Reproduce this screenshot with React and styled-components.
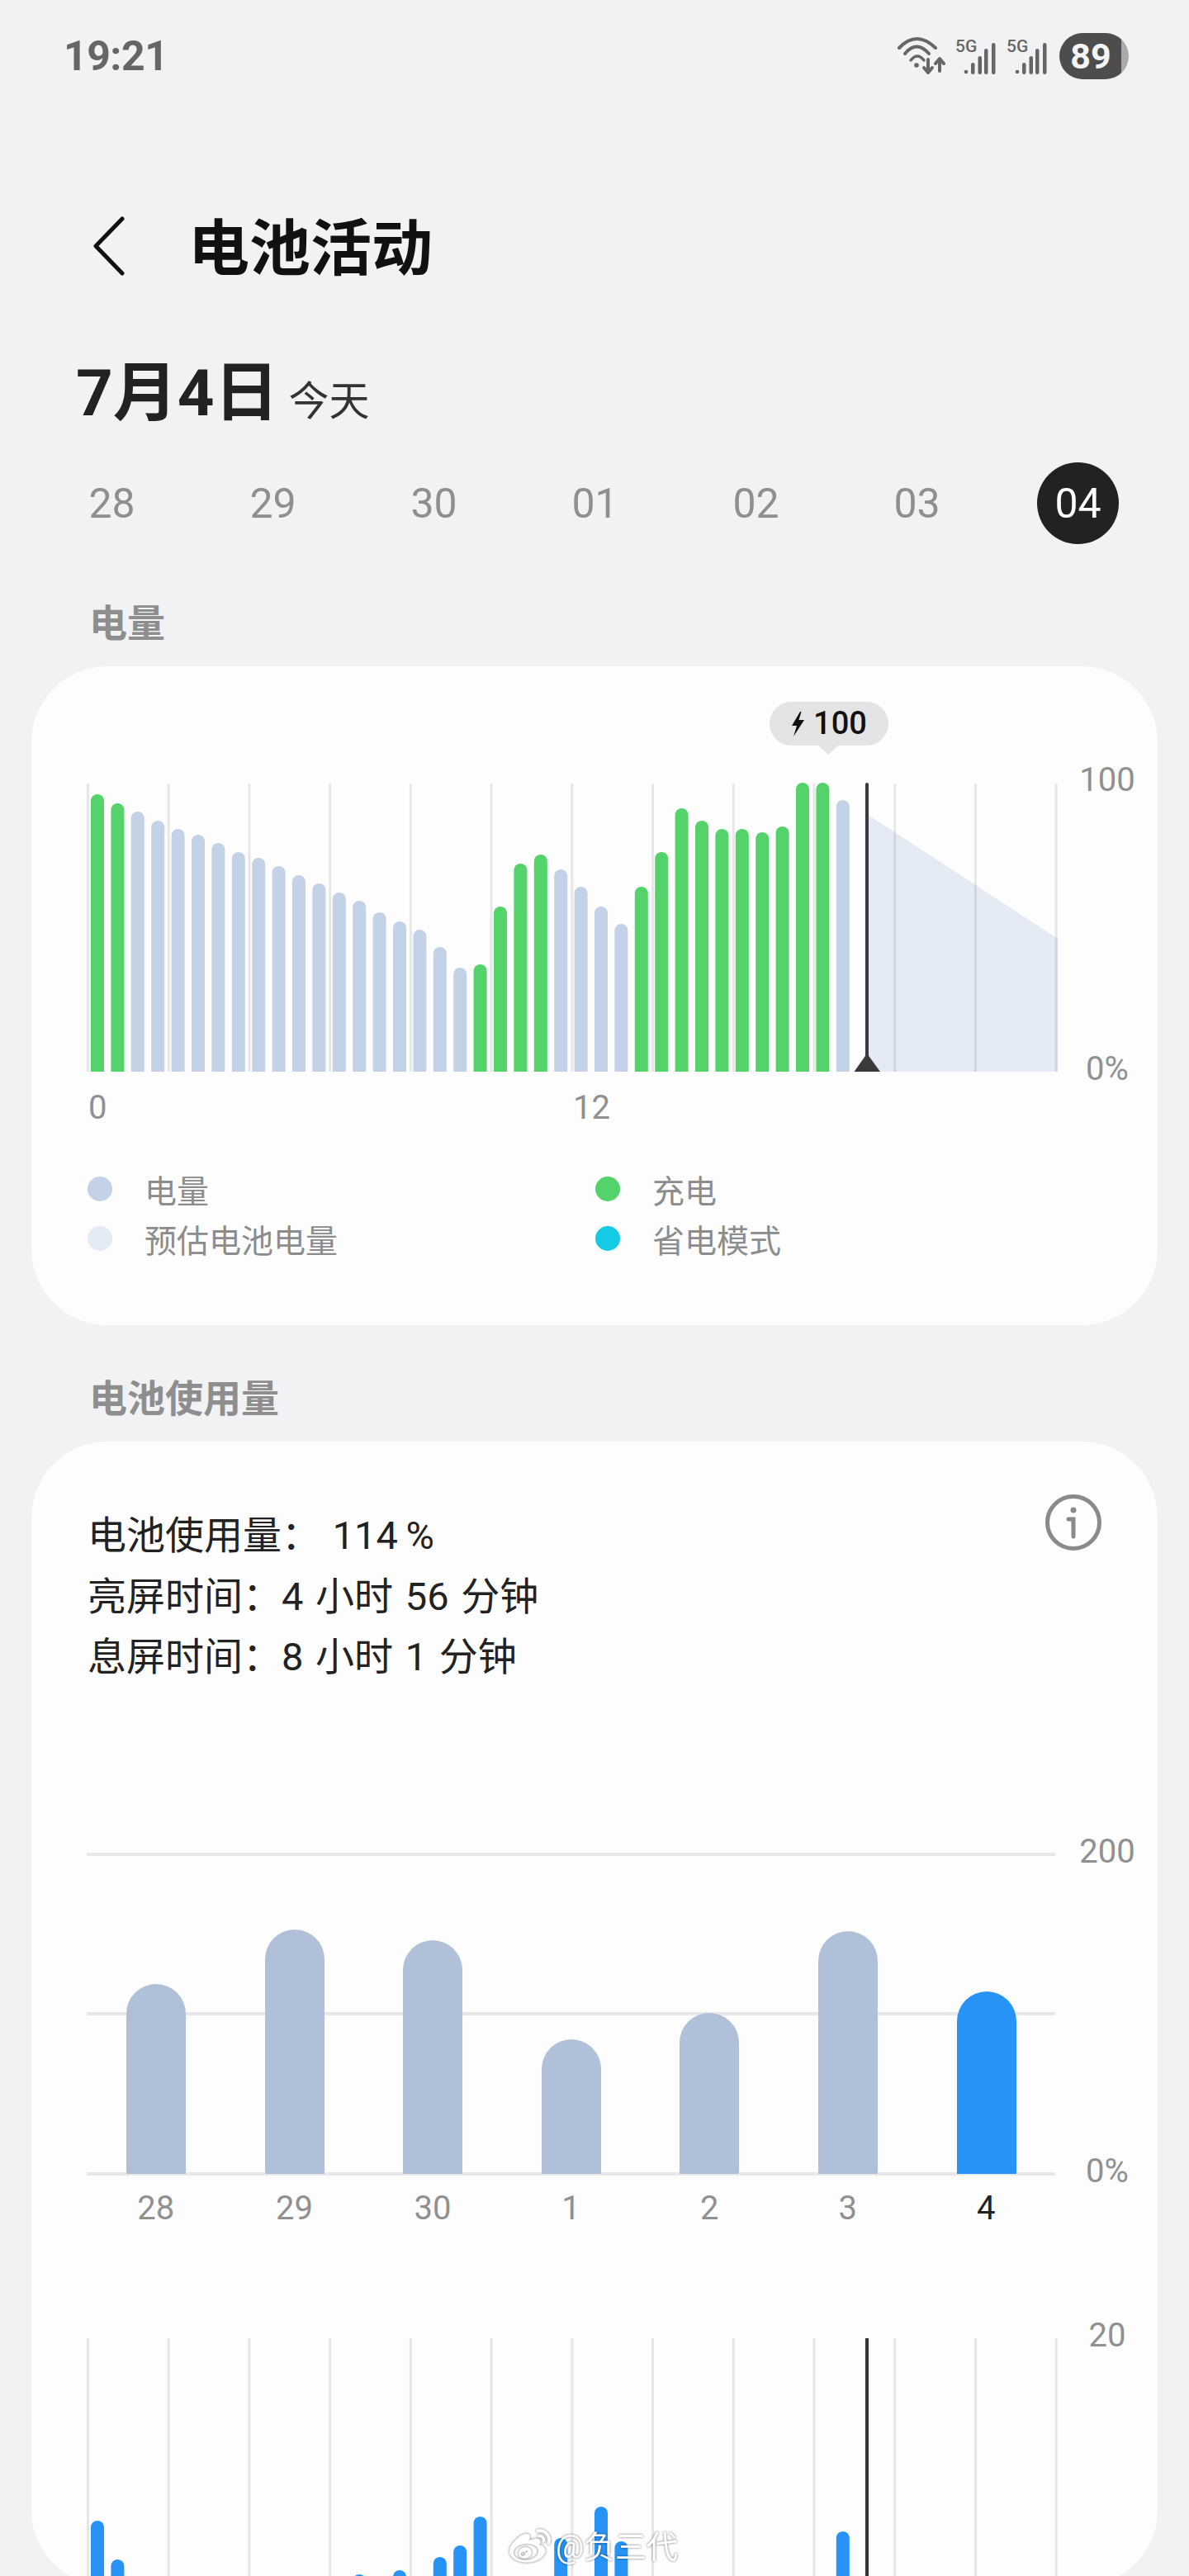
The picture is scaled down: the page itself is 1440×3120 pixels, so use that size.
import React from 'react';
import styled, { createGlobalStyle } from 'styled-components';
import { FaWeibo } from 'react-icons/fa';

const FONT = `Roboto, "Noto Sans CJK SC", sans-serif`;
const CJK = `"Noto Sans CJK SC", sans-serif`;

// tops are in page pixels, read off the screenshot
const PITCH = 24.4;
const g = 'green';
const b = 'blue';
const LEVELS = [
  [961, g], [972, g], [982, b], [993, b], [1003, b], [1010, b], [1020, b], [1031, b], [1038, b], [1048, b],
  [1059, b], [1069, b], [1080, b], [1090, b], [1104, b], [1115, b], [1125, b], [1146, b], [1171, b], [1167, g],
  [1097, g], [1045, g], [1034, g], [1052, b], [1073, b], [1097, b], [1118, b], [1073, g], [1031, g], [978, g],
  [993, g], [1003, g], [1003, g], [1007, g], [1000, g], [947, g], [947, g], [968, b],
];
const DAILY = [
  { day: '28', x: 153, top: 2402 },
  { day: '29', x: 321, top: 2336 },
  { day: '30', x: 488, top: 2349 },
  { day: '1', x: 656, top: 2469 },
  { day: '2', x: 823, top: 2437 },
  { day: '3', x: 991, top: 2338 },
  { day: '4', x: 1159, top: 2411, active: true },
];
const HOURLY = [
  [0, 3052], [1, 3099], [13, 3117], [15, 3112], [16, 3119], [17, 3096], [18, 3082], [19, 3047],
  [23, 3073], [25, 3035], [26, 3077], [37, 3065],
];
const DATES = ['28', '29', '30', '01', '02', '03', '04'];
const GRID = Array.from({ length: 13 }, (_, i) => i * 97.72);

const barPath = (x, top, bottom, w, r) =>
  `M${x} ${bottom}V${top + r}A${r} ${r} 0 0 1 ${x + w} ${top + r}V${bottom}Z`;

const GlobalStyle = createGlobalStyle`
  body {
    margin: 0;
    background: #f2f2f4;
    font-family: ${FONT};
  }
`;

const Page = styled.div`
  position: relative;
  width: 1440px;
  height: 3120px;
  overflow: hidden;
  background: #f2f2f4;
`;

const StatusBar = styled.div`
  display: flex;
  align-items: center;
  justify-content: space-between;
  height: 136px;
  padding: 0 73px 0 77px;
`;

const Time = styled.div`
  font-size: 50px;
  font-weight: 700;
  color: #666;
  letter-spacing: -0.5px;
`;

const StatusIcons = styled.div`
  display: flex;
  align-items: center;
  gap: 12px;
`;

const Battery = styled.div`
  display: flex;
  align-items: center;
  justify-content: center;
  width: 84px;
  height: 56px;
  margin-left: 2px;
  padding-right: 8px;
  box-sizing: border-box;
  border-radius: 28px;
  background: linear-gradient(90deg, #4d4d4d 0 75px, #aaa 75px);
  color: #f4f4f4;
  font-size: 43px;
  font-weight: 700;
`;

const Header = styled.div`
  display: flex;
  align-items: center;
  gap: 77px;
  height: 84px;
  margin-top: 120px;
  padding-left: 112px;
`;

const Title = styled.h1`
  margin: -6px 0 0;
  font-family: ${CJK};
  font-size: 74px;
  font-weight: 700;
  line-height: 84px;
  color: #111;
`;

const DateRow = styled.div`
  display: flex;
  align-items: baseline;
  gap: 12px;
  height: 80px;
  margin-top: 97px;
  padding-left: 92px;
`;

const DateText = styled.div`
  font-size: 78px;
  font-weight: 700;
  line-height: 80px;
  color: #222;
`;

const Today = styled.div`
  font-family: ${CJK};
  font-size: 49px;
  color: #333;
`;

const DayStrip = styled.div`
  display: grid;
  grid-template-columns: repeat(7, 195px);
  height: 99px;
  margin-top: 43px;
  padding-left: 38px;
`;

const Day = styled.div`
  justify-self: center;
  display: flex;
  align-items: center;
  justify-content: center;
  width: 99px;
  height: 99px;
  border-radius: 50%;
  font-size: 50px;
  font-weight: 400;
  background: ${(p) => (p.$active ? '#222224' : 'transparent')};
  color: ${(p) => (p.$active ? '#fff' : '#8f8f8f')};
`;

const SectionLabel = styled.div`
  height: 60px;
  margin-top: ${(p) => p.$top}px;
  margin-bottom: 26px;
  padding-left: 108px;
  font-family: ${CJK};
  font-size: 46px;
  font-weight: 700;
  line-height: 60px;
  color: #8e8e8e;
`;

const Card = styled.div`
  margin: 0 38px;
  padding: ${(p) => p.$top}px 0 ${(p) => p.$bottom}px 67px;
  border-radius: 92px;
  background: #fdfdfe;
`;

const ChartRow = styled.div`
  display: flex;
  margin-top: ${(p) => p.$top || 0}px;
`;

const Plot = styled.div`
  position: relative;
  flex: none;
  width: 1176px;
  line-height: 0;
`;

const YAxis = styled.div`
  display: flex;
  flex-direction: column;
  justify-content: space-between;
  width: 120px;
  margin-top: ${(p) => p.$top}px;
  margin-bottom: ${(p) => p.$bottom}px;
`;

const AxisLabel = styled.div`
  font-size: 40px;
  font-weight: 400;
  line-height: 46px;
  text-align: ${(p) => p.$align || 'center'};
  color: ${(p) => (p.$active ? '#222' : '#909090')};
`;

const Bubble = styled.div`
  position: absolute;
  left: 827px;
  top: -96px;
  display: flex;
  align-items: center;
  justify-content: center;
  gap: 10px;
  width: 144px;
  height: 53px;
  border-radius: 27px;
  background: #e4e4e6;
  color: #111;
  font-size: 38px;
  font-weight: 500;
  line-height: 53px;

  &::after {
    content: '';
    position: absolute;
    left: 59px;
    top: 53px;
    width: 24px;
    height: 11px;
    background: #e4e4e6;
    clip-path: polygon(0 0, 100% 0, 50% 100%);
  }
`;

const HourTicks = styled.div`
  display: grid;
  grid-template-columns: 587px 60px;
  margin-top: 18px;
  padding-left: 2px;
`;

const Legend = styled.div`
  display: grid;
  grid-template-columns: 615px 615px;
  grid-auto-rows: 60px;
  margin-top: 45px;
  padding-left: 1px;
`;

const LegendItem = styled.div`
  display: flex;
  align-items: center;
  gap: 39px;
  font-family: ${CJK};
  font-size: 39px;
  color: #8c8c8c;
`;

const Dot = styled.span`
  width: 30px;
  height: 30px;
  border-radius: 50%;
  background: ${(p) => p.$color};
`;

const StatsHeader = styled.div`
  display: flex;
  align-items: flex-start;
  justify-content: space-between;
  padding-left: 1px;
  padding-right: 67px;
`;

const Stats = styled.div`
  font-size: 47px;
  line-height: 73.5px;
  color: #222;
  word-spacing: 3px;
`;

const InfoIcon = styled.svg`
  width: 70px;
  height: 70px;
  margin-top: -14px;
`;

const DayTicks = styled.div`
  display: grid;
  grid-template-columns: repeat(7, 167.6px);
  margin-top: 15px;
`;

const Watermark = styled.div`
  position: absolute;
  left: 617px;
  top: 3060px;
  display: flex;
  align-items: center;
  gap: 6px;
  color: #fff;
  font-size: 38px;
  line-height: 48px;
  filter: drop-shadow(0 0 1.5px rgba(0, 0, 0, 0.55));
`;

const WifiIcon = () => (
  <svg width="58" height="46" viewBox="0 0 58 46" fill="none" stroke="#666" strokeWidth="4" strokeLinecap="round" strokeLinejoin="round">
    <path d="M2 13Q23 -9 46 13" />
    <path d="M9 20Q23 3 38 20" />
    <path d="M16 28Q24 18 32 28" strokeWidth="3.5" />
    <circle cx="23" cy="34" r="2.8" fill="#666" stroke="none" />
    <path d="M37 27V42M32 37L37 43L42 37" />
    <path d="M51 41V27M46 32L51 26L56 32" />
  </svg>
);

const SignalIcon = () => (
  <svg width="50" height="46" viewBox="0 0 50 46" fill="#666">
    <text x="0" y="18" fontFamily="Roboto, sans-serif" fontSize="21" fontWeight="500">5G</text>
    <circle cx="13" cy="42" r="2.3" />
    <rect x="19" y="31" width="4.5" height="14" rx="2.2" />
    <rect x="27.5" y="23" width="4.5" height="22" rx="2.2" />
    <rect x="35" y="14" width="4.5" height="31" rx="2.2" />
    <rect x="44" y="7" width="4.5" height="38" rx="2.2" />
  </svg>
);

const BatteryPlot = () => (
  <svg width="1176" height="355" viewBox="105 945 1176 355">
    <polygon points="1050,985 1281,1136 1281,1297 1050,1297" fill="#e4ebf5" />
    {GRID.map((x) => (
      <rect key={x} x={105 + x} y="948" width="3" height="349" fill="#000" opacity="0.085" />
    ))}
    {LEVELS.map(([top, kind], i) => (
      <path key={i} d={barPath(110 + i * PITCH, top, 1297, 16, 8)} fill={kind === g ? '#54d36a' : '#c3d2e6'} />
    ))}
    <rect x="1048" y="947" width="4" height="340" rx="2" fill="#3a3a3c" />
    <polygon points="1034.5,1297 1066,1297 1050,1275" fill="#3a3a3c" />
  </svg>
);

const DailyPlot = () => (
  <svg width="1176" height="393" viewBox="105 2243 1176 393">
    {[2243, 2436, 2630].map((y) => (
      <rect key={y} x="105" y={y} width="1173" height="4" fill="#e8e8ea" />
    ))}
    {DAILY.map((d) => (
      <path key={d.day} d={barPath(d.x, d.top, 2632, 72, 36)} fill={d.active ? '#2794f5' : '#b1c0d9'} />
    ))}
  </svg>
);

const HourlyPlot = () => (
  <svg width="1176" height="300" viewBox="105 2831 1176 300">
    {GRID.map((x) => (
      <rect key={x} x={105 + x} y="2831" width="3" height="300" fill="#e6e6e8" />
    ))}
    {HOURLY.map(([n, top]) => (
      <path key={n} d={barPath(110 + n * PITCH, top, 3131, 16, 8)} fill="#2794f5" />
    ))}
    <rect x="1048" y="2831" width="4" height="300" fill="#333336" />
  </svg>
);

export default function App() {
  return (
    <Page>
      <GlobalStyle />
      <StatusBar>
        <Time>19:21</Time>
        <StatusIcons>
          <WifiIcon />
          <SignalIcon />
          <SignalIcon />
          <Battery>89</Battery>
        </StatusIcons>
      </StatusBar>

      <Header>
        <svg width="39" height="72" viewBox="0 0 39 72" fill="none" stroke="#111" strokeWidth="5" strokeLinecap="round" strokeLinejoin="round">
          <path d="M36 3L4 36L36 69" />
        </svg>
        <Title>电池活动</Title>
      </Header>

      <DateRow>
        <DateText>7月4日</DateText>
        <Today>今天</Today>
      </DateRow>

      <DayStrip>
        {DATES.map((d, i) => (
          <Day key={d} $active={i === DATES.length - 1}>{d}</Day>
        ))}
      </DayStrip>

      <SectionLabel $top={62}>电量</SectionLabel>
      <Card $top={139} $bottom={75}>
        <ChartRow>
          <Plot>
            <Bubble>
              <svg width="17" height="30" viewBox="0 0 17 30" fill="#111">
                <path d="M11 0L1 17H7L3 30L16 10H9.5L12.5 0Z" />
              </svg>
              100
            </Bubble>
            <BatteryPlot />
          </Plot>
          <YAxis $top={-24} $bottom={-17}>
            <AxisLabel>100</AxisLabel>
            <AxisLabel>0%</AxisLabel>
          </YAxis>
        </ChartRow>
        <HourTicks>
          <AxisLabel $align="left">0</AxisLabel>
          <AxisLabel $align="left">12</AxisLabel>
        </HourTicks>
        <Legend>
          <LegendItem><Dot $color="#c3d2e6" />电量</LegendItem>
          <LegendItem><Dot $color="#54d36a" />充电</LegendItem>
          <LegendItem><Dot $color="#e4ebf5" />预估电池电量</LegendItem>
          <LegendItem><Dot $color="#14cbe6" />省电模式</LegendItem>
        </Legend>
      </Card>

      <SectionLabel $top={55}>电池使用量</SectionLabel>
      <Card $top={77} $bottom={0}>
        <StatsHeader>
          <Stats>
            <div>电池使用量： 114{'\u2009'}%</div>
            <div>亮屏时间：4 小时 56 分钟</div>
            <div>息屏时间：8 小时 1 分钟</div>
          </Stats>
          <InfoIcon viewBox="0 0 70 70" fill="none" stroke="#8a8a8a" strokeWidth="5" strokeLinecap="round">
            <circle cx="35" cy="35" r="31.5" />
            <circle cx="35" cy="20" r="3.5" fill="#8a8a8a" stroke="none" />
            <path d="M29 31H35V52" />
          </InfoIcon>
        </StatsHeader>
        <ChartRow $top={200}>
          <Plot>
            <DailyPlot />
          </Plot>
          <YAxis $top={-24} $bottom={-16}>
            <AxisLabel>200</AxisLabel>
            <AxisLabel>0%</AxisLabel>
          </YAxis>
        </ChartRow>
        <DayTicks>
          {DAILY.map((d) => (
            <AxisLabel key={d.day} $active={d.active}>{d.day}</AxisLabel>
          ))}
        </DayTicks>
        <ChartRow $top={134}>
          <Plot>
            <HourlyPlot />
          </Plot>
          <YAxis $top={-26} $bottom={0}>
            <AxisLabel>20</AxisLabel>
          </YAxis>
        </ChartRow>
      </Card>

      <Watermark>
        <FaWeibo size={50} />
        @负三代
      </Watermark>
    </Page>
  );
}
